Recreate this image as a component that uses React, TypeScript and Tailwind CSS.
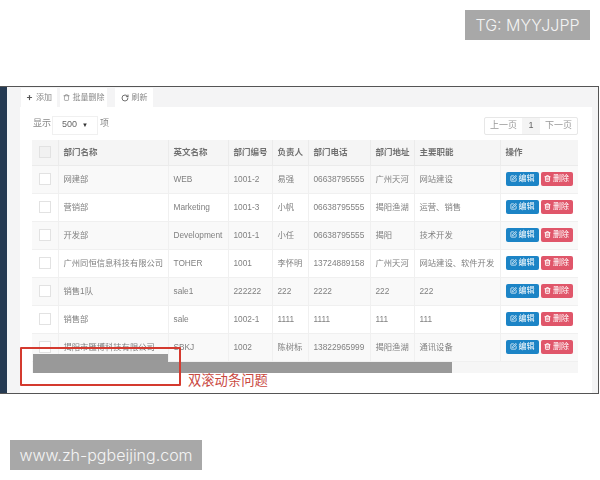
import { Plus, RotateCw, SquarePen, Trash, Trash2 } from "lucide-react";

const rows = [
  ["网建部", "WEB", "1001-2", "易强", "06638795555", "广州天河", "网站建设"],
  ["营销部", "Marketing", "1001-3", "小帆", "06638795555", "揭阳渔湖", "运营、销售"],
  ["开发部", "Development", "1001-1", "小任", "06638795555", "揭阳", "技术开发"],
  ["广州同恒信息科技有限公司", "TOHER", "1001", "李怀明", "13724889158", "广州天河", "网站建设、软件开发"],
  ["销售1队", "sale1", "222222", "222", "2222", "222", "222"],
  ["销售部", "sale", "1002-1", "1111", "1111", "111", "111"],
  ["揭阳市匯博科技有限公司", "SBKJ", "1002", "陈树标", "13822965999", "揭阳渔湖", "通讯设备"],
];
const heads = ["部门名称", "英文名称", "部门编号", "负责人", "部门电话", "部门地址", "主要职能"];
const font = "font-['Liberation_Sans','Noto_Sans_CJK_SC',sans-serif]";

export default function App() {
  return (
    <div className={`relative w-[600px] h-[480px] bg-white overflow-hidden pt-[86px] ${font}`}>
      <div className="flex w-[599px] h-[308px] border-t border-r border-b border-[#555]">
        <div className="w-[7px] bg-[#253a52]" />
        <div className="flex-1 flex flex-col bg-[#f4f4f5] pl-[13px] pr-[6px] blur-[0.35px]">
          <div className="flex h-[20px] pt-[1px] text-[8px] text-[#888]">
            <div className="flex items-center gap-[3px] bg-white w-[36px] justify-center ml-[1px] mr-[3px]">
              <Plus size={7} strokeWidth={4} className="text-[#555]" />添加
            </div>
            <div className="flex items-center gap-[3px] bg-white w-[47px] justify-center mr-[8px]">
              <Trash size={7} className="text-[#777]" />批量删除
            </div>
            <div className="flex items-center gap-[3px] bg-white w-[38px] justify-center">
              <RotateCw size={8} strokeWidth={2.5} className="text-[#555]" />刷新
            </div>
          </div>
          <div className="relative flex-1 bg-white pl-[12px] pr-[14px]">
            <div className="flex items-center h-[33px] pt-[4px] pb-[1px] text-[9px] text-[#888]">
              <span className="w-[20px] -mt-[2px] pl-[1px]">显示</span>
              <div className="flex items-center justify-between w-[46px] h-[19px] border border-[#f0f0f0] px-[9px] text-[#666]">
                <span>500</span>
                <span className="text-[6px] text-[#333]">▼</span>
              </div>
              <span className="ml-[2px] -mt-[2px]">项</span>
              <div className="ml-auto flex h-[18px] border border-[#e7e7e7] rounded-[2px] items-center text-[9px] text-[#999] mt-[1px]">
                <span className="w-[37px] text-center">上一页</span>
                <span className="w-[18px] h-full flex items-center justify-center bg-[#f4f4f4] text-[#666]">1</span>
                <span className="w-[37px] text-center">下一页</span>
              </div>
            </div>
            <table className="w-[546px] table-fixed border-collapse text-[8.3px] text-[#808080]">
              <colgroup>
                <col className="w-[26px]" />
                <col className="w-[110px]" />
                <col className="w-[60px]" />
                <col className="w-[44px]" />
                <col className="w-[36px]" />
                <col className="w-[62px]" />
                <col className="w-[44px]" />
                <col className="w-[86px]" />
                <col className="w-[78px]" />
              </colgroup>
              <thead>
                <tr className="h-[25px] bg-[#f5f5f5] text-[#707070] text-[8.5px]">
                  <th className="border-r border-b border-[#ebebeb]">
                    <div className="mx-auto w-[12px] h-[12px] border border-[#e2e2e2] bg-[#f1f1f1]" />
                  </th>
                  {heads.map((h) => (
                    <th key={h} className="border-r border-b border-[#ebebeb] pl-[5px] text-left font-bold whitespace-nowrap overflow-hidden">
                      {h}
                    </th>
                  ))}
                  <th className="border-b border-[#ebebeb] pl-[5px] text-left font-bold">操作</th>
                </tr>
              </thead>
              <tbody>
                {rows.map((r, i) => (
                  <tr key={r[0]} className={`h-[28px] ${i % 2 === 0 ? "bg-[#f9f9f9]" : "bg-white"}`}>
                    <td className="border-r border-b border-[#f0f0f0]">
                      <div className="mx-auto w-[12px] h-[12px] border border-[#e2e2e2] bg-white" />
                    </td>
                    {r.map((c, j) => (
                      <td key={j} className="border-r border-b border-[#f0f0f0] pl-[5px] whitespace-nowrap">
                        {c}
                      </td>
                    ))}
                    <td className="border-b border-[#f0f0f0] pl-[5px]">
                      <div className="flex gap-[2px] -mt-[1px] text-[8px] text-white">
                        <div className="flex items-center justify-center gap-[2px] w-[33px] h-[14px] rounded-[2px] bg-[#1c84c6]">
                          <SquarePen size={7} strokeWidth={2.5} />编辑
                        </div>
                        <div className="flex items-center justify-center gap-[2px] w-[32px] h-[14px] rounded-[2px] bg-[#e0566a]">
                          <Trash2 size={7} strokeWidth={3} />删除
                        </div>
                      </div>
                    </td>
                  </tr>
                ))}
              </tbody>
            </table>
            <div className="flex w-[546px] h-[11px] bg-[#f6f6f6]">
              <div className="w-[419px] ml-[1px] bg-[#999]" />
            </div>
            <div className="absolute left-[13px] top-[247px] w-[135px] h-[19px] bg-[#999]" />
          </div>
        </div>
      </div>

      <div className="absolute left-[20px] top-[347px] w-[161px] h-[39px] border-2 border-[#d43a2f] rounded-[1px]" />
      <div className="absolute left-[188px] top-[372px] text-[13.3px] leading-[18px] text-[#c9493f]">双滚动条问题</div>

      <div className="absolute left-[465px] top-[10px] w-[125px] h-[30px] flex items-center justify-center bg-[#a8a8a8] text-[#f4f4f4] text-[16px] font-['Inter',sans-serif] font-light">
        TG: MYYJJPP
      </div>
      <div className="absolute left-[10px] top-[440px] w-[192px] h-[30px] flex items-center justify-center bg-[#a8a8a8] text-[#f4f4f4] text-[16px] font-['Inter',sans-serif] font-light whitespace-nowrap">
        www.zh-pgbeijing.com
      </div>
    </div>
  );
}
